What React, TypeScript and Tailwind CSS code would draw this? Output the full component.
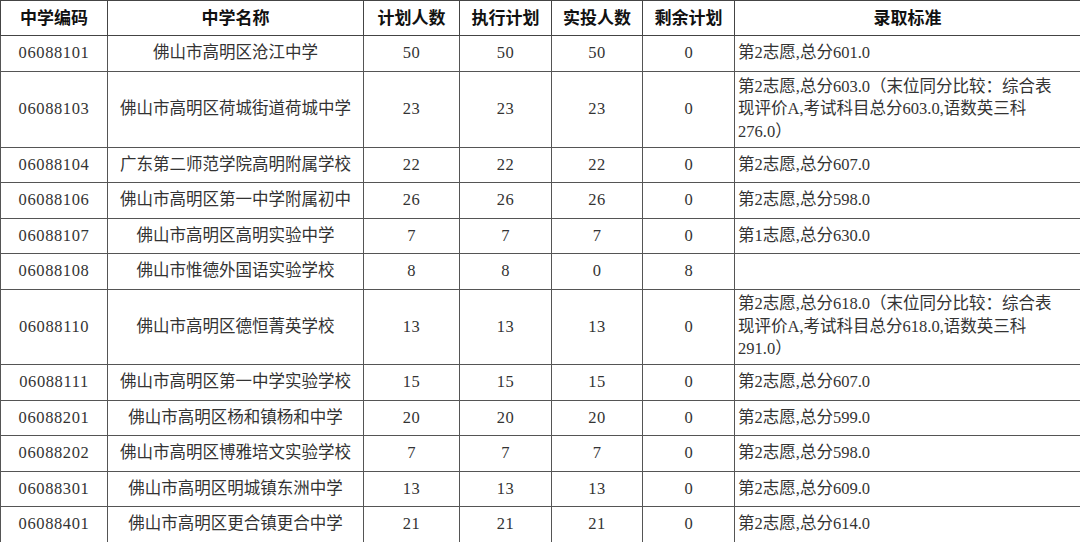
import React from "react";

type Row = {
  code: string;
  name: string;
  plan: string;
  exec: string;
  cast: string;
  left: string;
  rule: string[];
  h: number;
};

const rows: Row[] = [
  { code: "06088101", name: "佛山市高明区沧江中学", plan: "50", exec: "50", cast: "50", left: "0", rule: ["第2志愿,总分601.0"], h: 36 },
  {
    code: "06088103",
    name: "佛山市高明区荷城街道荷城中学",
    plan: "23",
    exec: "23",
    cast: "23",
    left: "0",
    rule: ["第2志愿,总分603.0（末位同分比较：综合表", "现评价A,考试科目总分603.0,语数英三科", "276.0）"],
    h: 76,
  },
  { code: "06088104", name: "广东第二师范学院高明附属学校", plan: "22", exec: "22", cast: "22", left: "0", rule: ["第2志愿,总分607.0"], h: 35 },
  { code: "06088106", name: "佛山市高明区第一中学附属初中", plan: "26", exec: "26", cast: "26", left: "0", rule: ["第2志愿,总分598.0"], h: 36 },
  { code: "06088107", name: "佛山市高明区高明实验中学", plan: "7", exec: "7", cast: "7", left: "0", rule: ["第1志愿,总分630.0"], h: 35 },
  { code: "06088108", name: "佛山市惟德外国语实验学校", plan: "8", exec: "8", cast: "0", left: "8", rule: [], h: 36 },
  {
    code: "06088110",
    name: "佛山市高明区德恒菁英学校",
    plan: "13",
    exec: "13",
    cast: "13",
    left: "0",
    rule: ["第2志愿,总分618.0（末位同分比较：综合表", "现评价A,考试科目总分618.0,语数英三科", "291.0）"],
    h: 75,
  },
  { code: "06088111", name: "佛山市高明区第一中学实验学校", plan: "15", exec: "15", cast: "15", left: "0", rule: ["第2志愿,总分607.0"], h: 36 },
  { code: "06088201", name: "佛山市高明区杨和镇杨和中学", plan: "20", exec: "20", cast: "20", left: "0", rule: ["第2志愿,总分599.0"], h: 35 },
  { code: "06088202", name: "佛山市高明区博雅培文实验学校", plan: "7", exec: "7", cast: "7", left: "0", rule: ["第2志愿,总分598.0"], h: 36 },
  { code: "06088301", name: "佛山市高明区明城镇东洲中学", plan: "13", exec: "13", cast: "13", left: "0", rule: ["第2志愿,总分609.0"], h: 35 },
  { code: "06088401", name: "佛山市高明区更合镇更合中学", plan: "21", exec: "21", cast: "21", left: "0", rule: ["第2志愿,总分614.0"], h: 36 },
];

const headers = ["中学编码", "中学名称", "计划人数", "执行计划", "实投人数", "剩余计划", "录取标准"];

const App = () => {
  return (
    <div
      className="w-[1080px] h-[542px] overflow-hidden bg-white"
      style={{ fontFamily: '"Liberation Serif", "Noto Sans CJK SC", serif' }}
    >
      <table className="w-[1080px] table-fixed border-collapse text-[16.5px] text-[#333]">
        <colgroup>
          <col className="w-[107px]" />
          <col className="w-[256px]" />
          <col className="w-[96px]" />
          <col className="w-[92px]" />
          <col className="w-[91px]" />
          <col className="w-[92px]" />
          <col className="w-[346px]" />
        </colgroup>
        <thead>
          <tr className="h-[35px]">
            {headers.map((h) => (
              <th
                key={h}
                className="border border-[#444] p-0 text-center text-[17px] font-bold text-[#111] leading-none"
              >
                {h}
              </th>
            ))}
          </tr>
        </thead>
        <tbody>
          {rows.map((r) => (
            <tr key={r.code} style={{ height: r.h }}>
              <td className="border border-[#555] p-0 text-center tracking-[0.6px]">{r.code}</td>
              <td className="border border-[#555] p-0 text-center whitespace-nowrap">{r.name}</td>
              <td className="border border-[#555] p-0 text-center tracking-[0.5px]">{r.plan}</td>
              <td className="border border-[#555] p-0 text-center tracking-[0.5px]">{r.exec}</td>
              <td className="border border-[#555] p-0 text-center tracking-[0.5px]">{r.cast}</td>
              <td className="border border-[#555] p-0 text-center">{r.left}</td>
              <td className="border border-[#555] py-0 pl-[3px] pr-0 text-left whitespace-nowrap leading-[22.5px]">
                {r.rule.map((line, i) => (
                  <div key={i}>{line}</div>
                ))}
              </td>
            </tr>
          ))}
        </tbody>
      </table>
    </div>
  );
};

export default App;
